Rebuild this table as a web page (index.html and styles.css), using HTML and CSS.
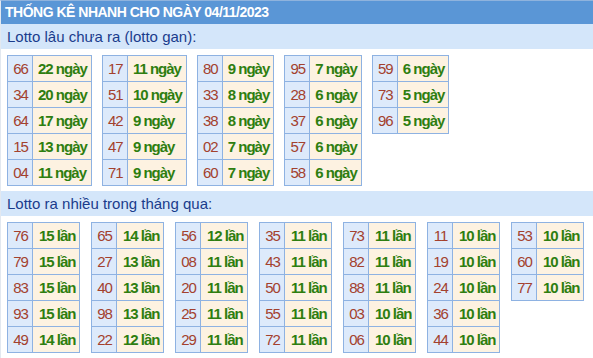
FILE: index.html
```html
<!DOCTYPE html>
<html>
<head>
<meta charset="utf-8">
<link rel="stylesheet" href="styles.css">
</head>
<body>
<div class="box">
  <div class="title">THỐNG KÊ NHANH CHO NGÀY 04/11/2023</div>
  <div class="sub">Lotto lâu chưa ra (lotto gan):</div>
  <div class="tables">
    <table><tr><td class="n">66</td><td class="v">22 ngày</td></tr><tr><td class="n">34</td><td class="v">20 ngày</td></tr><tr><td class="n">64</td><td class="v">17 ngày</td></tr><tr><td class="n">15</td><td class="v">13 ngày</td></tr><tr><td class="n">04</td><td class="v">11 ngày</td></tr></table>
    <table><tr><td class="n">17</td><td class="v">11 ngày</td></tr><tr><td class="n">51</td><td class="v">10 ngày</td></tr><tr><td class="n">42</td><td class="v">9 ngày</td></tr><tr><td class="n">47</td><td class="v">9 ngày</td></tr><tr><td class="n">71</td><td class="v">9 ngày</td></tr></table>
    <table><tr><td class="n">80</td><td class="v">9 ngày</td></tr><tr><td class="n">33</td><td class="v">8 ngày</td></tr><tr><td class="n">38</td><td class="v">8 ngày</td></tr><tr><td class="n">02</td><td class="v">7 ngày</td></tr><tr><td class="n">60</td><td class="v">7 ngày</td></tr></table>
    <table><tr><td class="n">95</td><td class="v">7 ngày</td></tr><tr><td class="n">28</td><td class="v">6 ngày</td></tr><tr><td class="n">37</td><td class="v">6 ngày</td></tr><tr><td class="n">57</td><td class="v">6 ngày</td></tr><tr><td class="n">58</td><td class="v">6 ngày</td></tr></table>
    <table><tr><td class="n">59</td><td class="v">6 ngày</td></tr><tr><td class="n">73</td><td class="v">5 ngày</td></tr><tr><td class="n">96</td><td class="v">5 ngày</td></tr></table>
  </div>
  <div class="sub">Lotto ra nhiều trong tháng qua:</div>
  <div class="tables many">
    <table><tr><td class="n">76</td><td class="v">15 lần</td></tr><tr><td class="n">79</td><td class="v">15 lần</td></tr><tr><td class="n">83</td><td class="v">15 lần</td></tr><tr><td class="n">93</td><td class="v">15 lần</td></tr><tr><td class="n">49</td><td class="v">14 lần</td></tr></table>
    <table><tr><td class="n">65</td><td class="v">14 lần</td></tr><tr><td class="n">27</td><td class="v">13 lần</td></tr><tr><td class="n">40</td><td class="v">13 lần</td></tr><tr><td class="n">98</td><td class="v">13 lần</td></tr><tr><td class="n">22</td><td class="v">12 lần</td></tr></table>
    <table><tr><td class="n">56</td><td class="v">12 lần</td></tr><tr><td class="n">08</td><td class="v">11 lần</td></tr><tr><td class="n">20</td><td class="v">11 lần</td></tr><tr><td class="n">25</td><td class="v">11 lần</td></tr><tr><td class="n">29</td><td class="v">11 lần</td></tr></table>
    <table><tr><td class="n">35</td><td class="v">11 lần</td></tr><tr><td class="n">43</td><td class="v">11 lần</td></tr><tr><td class="n">50</td><td class="v">11 lần</td></tr><tr><td class="n">55</td><td class="v">11 lần</td></tr><tr><td class="n">72</td><td class="v">11 lần</td></tr></table>
    <table><tr><td class="n">73</td><td class="v">11 lần</td></tr><tr><td class="n">82</td><td class="v">11 lần</td></tr><tr><td class="n">88</td><td class="v">11 lần</td></tr><tr><td class="n">03</td><td class="v">10 lần</td></tr><tr><td class="n">06</td><td class="v">10 lần</td></tr></table>
    <table><tr><td class="n">11</td><td class="v">10 lần</td></tr><tr><td class="n">19</td><td class="v">10 lần</td></tr><tr><td class="n">24</td><td class="v">10 lần</td></tr><tr><td class="n">36</td><td class="v">10 lần</td></tr><tr><td class="n">44</td><td class="v">10 lần</td></tr></table>
    <table><tr><td class="n">53</td><td class="v">10 lần</td></tr><tr><td class="n">60</td><td class="v">10 lần</td></tr><tr><td class="n">77</td><td class="v">10 lần</td></tr></table>
  </div>
</div>
</body>
</html>
```
FILE: styles.css
```css
html, body {
  margin: 0;
  padding: 0;
  background: #ffffff;
}
body {
  font-family: "Liberation Sans", Arial, sans-serif;
}
.box {
  width: 593px;
  border-left: 1px solid #e2e8f0;
  border-top: 1px solid #8fb3dd;
  box-sizing: border-box;
}
.title {
  height: 23px;
  background: #5a96d6;
  color: #ffffff;
  font-weight: bold;
  font-size: 14px;
  line-height: 23px;
  padding-left: 4px;
  letter-spacing: -0.5px;
}
.sub {
  height: 25px;
  background: #d4e6fa;
  color: #1a3c8c;
  font-size: 15px;
  line-height: 25px;
  padding-left: 6px;
}
.tables {
  display: flex;
  flex-wrap: wrap;
  gap: 10px;
  padding: 6px 0 5px 6px;
  align-items: flex-start;
}
.many {
  gap: 11px;
}
table {
  border-collapse: collapse;
  font-size: 15px;
  letter-spacing: -1px;
  flex: none;
}
td {
  border: 1px solid #8eb2e2;
  height: 25px;
  padding: 0 4px 0 5px;
  line-height: 18px;
  white-space: nowrap;
}
td.n {
  background: #ddeafb;
  color: #a3412e;
  text-align: center;
  padding: 0 0 0 1px;
  width: 23px;
}
td.v {
  background: #fdf2e1;
  color: #2e7e10;
  font-weight: bold;
}
.many table {
  table-layout: fixed;
  width: 73px;
}
.many td.v {
  padding: 0 0 0 6px;
  overflow: visible;
}
```
